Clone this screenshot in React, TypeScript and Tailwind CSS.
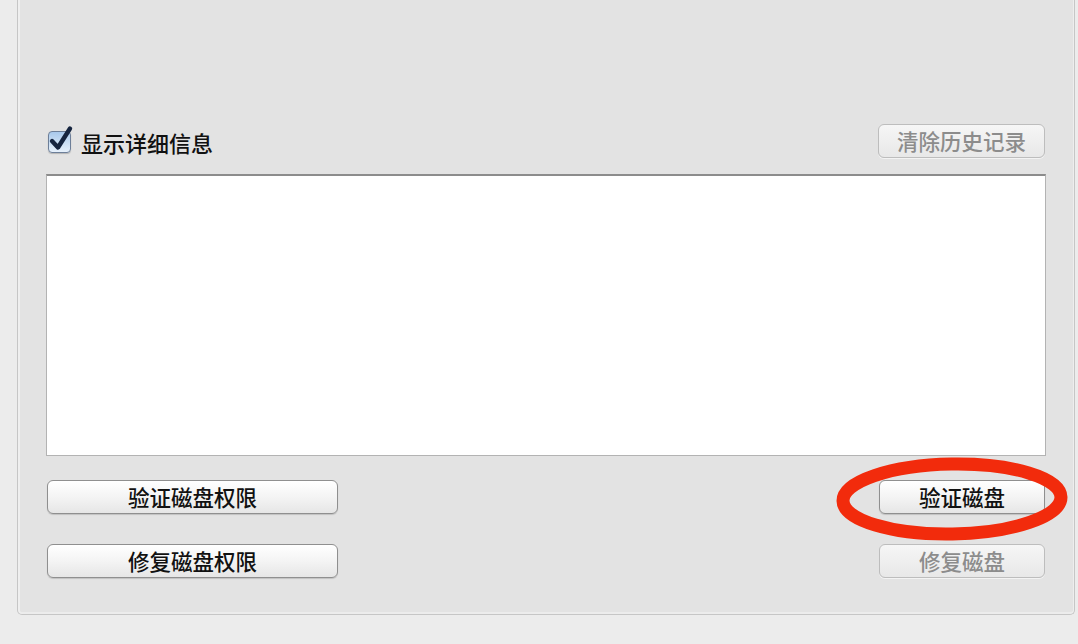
import React from "react";

const font = { fontFamily: '"Noto Sans CJK SC", "Noto Sans", sans-serif' };

function MacButton({ label, disabled, className = "" }: { label: string; disabled?: boolean; className?: string }) {
  return (
    <div
      className={
        "h-[34px] flex items-center justify-center rounded-[6px] border text-[21.5px] leading-none font-medium " +
        (disabled
          ? "border-[#bdbdbd] bg-gradient-to-b from-[#f6f6f6] to-[#e8e8e8] text-[#8c8c8c] shadow-[0_1px_0_#f3f3f3] "
          : "border-[#8f8f8f] bg-gradient-to-b from-[#ffffff] via-[#f4f4f4] to-[#e6e6e6] text-[#111111] shadow-[0_1px_1px_rgba(0,0,0,0.15)] ") +
        className
      }
    >
      <span className="-mt-[1px]">{label}</span>
    </div>
  );
}

function Checkbox() {
  return (
    <div className="relative w-[24px] h-[24px] mt-[2px]">
      <div className="absolute left-0 top-[1px] w-[23px] h-[22px] rounded-[4px] border border-[#6d7f99] bg-gradient-to-b from-[#a9c9ec] via-[#c8ddf3] to-[#e6f0fb] shadow-[0_1px_1px_rgba(0,0,0,0.2)]" />
      <svg className="absolute -left-[1px] -top-[5px]" width="28" height="30" viewBox="0 0 28 30">
        <path
          d="M5 16 L11 22.5 L23 3.5"
          fill="none"
          stroke="#15243f"
          strokeWidth="4.4"
          strokeLinecap="round"
          strokeLinejoin="round"
        />
      </svg>
    </div>
  );
}

export default function App() {
  return (
    <div className="relative w-[1078px] h-[644px] overflow-hidden bg-[#ececec]" style={font}>
      <div className="ml-[17px] mr-[3px] h-[615px] bg-[#e3e3e3] border-l border-r border-b border-[#c6c6c6] rounded-b-[5px] shadow-[inset_2px_0_0_#efefef,inset_-1px_0_0_#eeeeee,inset_0_-2px_0_#ececec] pt-[124px] px-[28px]">
        <div className="flex items-center justify-between h-[34px]">
          <div className="flex items-center ml-[2px]">
            <Checkbox />
            <span className="ml-[9px] text-[22px] font-medium text-[#111111] leading-none mt-[1px]">显示详细信息</span>
          </div>
          <MacButton label="清除历史记录" disabled className="w-[167px] mr-[1px]" />
        </div>
        <div className="mt-[16px] h-[282px] bg-white border border-[#b3b3b3] border-t-[#8c8c8c] border-t-2" />
        <div className="mt-[24px] flex justify-between px-[1px]">
          <MacButton label="验证磁盘权限" className="w-[291px]" />
          <MacButton label="验证磁盘" className="w-[166px]" />
        </div>
        <div className="mt-[30px] flex justify-between px-[1px]">
          <MacButton label="修复磁盘权限" className="w-[291px]" />
          <MacButton label="修复磁盘" disabled className="w-[166px]" />
        </div>
      </div>
      <svg className="absolute left-0 top-0 pointer-events-none" width="1078" height="644" viewBox="0 0 1078 644">
        <ellipse cx="952" cy="499" rx="109" ry="35" fill="none" stroke="#f22b0c" strokeWidth="13" transform="rotate(-1 952 499)" />
      </svg>
    </div>
  );
}
